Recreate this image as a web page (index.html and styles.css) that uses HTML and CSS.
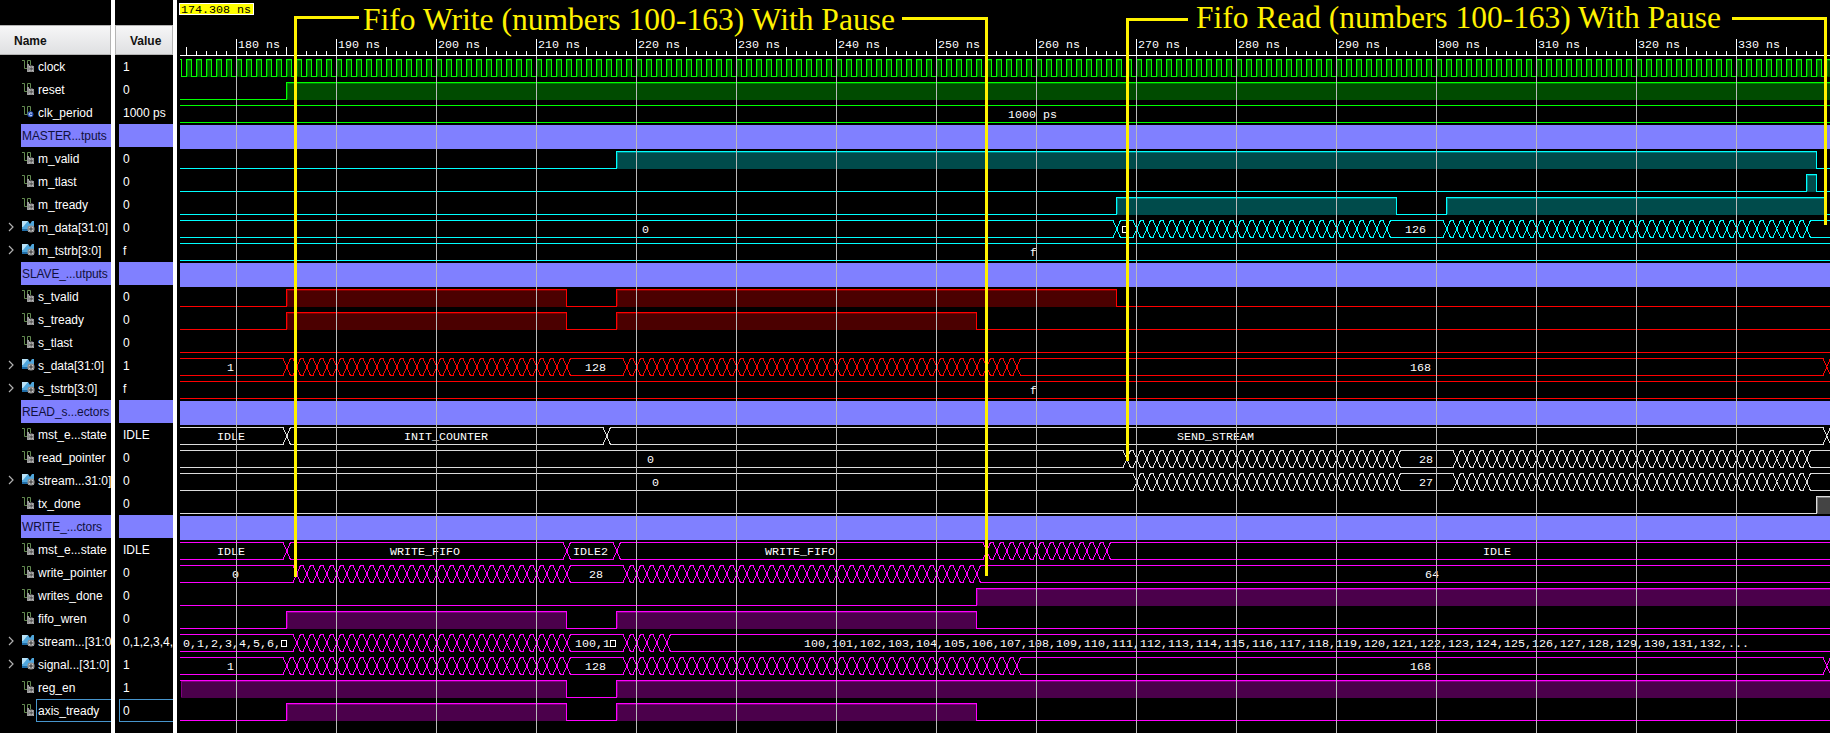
FILE: index.html
```html
<!DOCTYPE html>
<html lang="en">
<head>
<meta charset="utf-8">
<title>Waveform viewer</title>
<link rel="stylesheet" href="styles.css">
</head>
<body>
<svg class="defs" width="0" height="0">
  <defs>
    <symbol id="icon-wire" viewBox="0 0 13 13">
      <path d="M0 0.5H2.5V8.5H5.5V0.5H8.5V5" fill="none" stroke="#638a50"/>
      <path d="M5 4H7V12H5Z" fill="#9a9a9a"/>
      <path d="M7 5.5H10.5L12 7V12H7L6 10V7Z" fill="#8c8c8c"/>
      <path d="M7 6L11.5 11.5M11.5 6L7 11.5" stroke="#c8c8c8"/>
      <circle cx="9.3" cy="8.7" r="1.3" fill="#555"/>
    </symbol>
    <symbol id="icon-const" viewBox="0 0 13 13">
      <path d="M0 0.5H2.5V8.5H5.5V0.5H8.5V5" fill="none" stroke="#638a50"/>
      <circle cx="8.4" cy="8.3" r="3" fill="#2f55b4"/>
      <path d="M10 7.4C9 6.4 7.2 7 7.2 8.3S9 10.2 10 9.2" fill="none" stroke="#dfe8ff"/>
    </symbol>
    <symbol id="icon-bus" viewBox="0 0 13 13">
      <path d="M0 0H6L8 3L10 0H12V5H6V10H0Z" fill="#4fa6dc"/>
      <path d="M0 0H6L1 6H0Z" fill="#b9e2f7"/>
      <path d="M0 8H6V10H0Z" fill="#1f6ca6"/>
      <circle cx="9" cy="8" r="3.6" fill="#929292"/>
      <path d="M6.5 5.5L11.5 10.5M11.5 5.5L6.5 10.5" stroke="#c9c9c9"/>
      <circle cx="9" cy="8" r="1.4" fill="#555"/>
    </symbol>
  </defs>
</svg>
<div class="viewer">
  <div class="names">
    <div class="head head-name">Name</div>
    <div id="names"></div>
  </div>
  <div class="splitter"></div>
  <div class="values">
    <div class="head head-value">Value</div>
    <div id="values"></div>
  </div>
  <div class="splitter"></div>
  <div class="waves">
    <svg class="ruler" id="ruler" width="1653" height="56" viewBox="177 0 1653 56"></svg>
    <div id="waves"></div>
    <svg class="overlay" id="overlay" width="1653" height="733" viewBox="177 0 1653 733"></svg>
    <svg class="cursor" width="75" height="12" viewBox="0 0 75 12">
      <rect x="0.5" y="0.5" width="74" height="11" fill="#ff0" stroke="#fff"/>
      <text x="2" y="10" textLength="70" lengthAdjust="spacingAndGlyphs">174.308 ns</text>
    </svg>
  </div>
</div>
<script src="main.js"></script>
</body>
</html>
```
FILE: styles.css
```css
body {
  margin: 0;
  background: #000;
  color: #fff;
  font: 12px "Liberation Sans", Arial, sans-serif;
  overflow: hidden;
}
.defs { position: absolute; }
.viewer { display: flex; width: 1830px; height: 733px; overflow: hidden; }
.names { width: 111px; padding-top: 25px; overflow: hidden; flex: none; }
.splitter { width: 4px; background: #fff; flex: none; }
.values { width: 58px; padding-top: 25px; overflow: hidden; flex: none; }
.waves { position: relative; width: 1653px; flex: none; }

.head {
  box-sizing: border-box;
  height: 30px;
  line-height: 31px;
  color: #111;
  font-weight: bold;
  border: solid #b4b4b4;
  background: linear-gradient(#f6f6f7, #dfe0e2);
}
.head-name { padding-left: 14px; border-width: 1px 1px 1px 0; }
.head-value { padding-left: 14px; border-width: 1px 1px 1px 1px; }

.row { display: flex; height: 23px; line-height: 25px; white-space: pre; }
.arrow { width: 21px; flex: none; }
.arrow svg { display: block; margin: 6px 0 0 7px; }
.cell { display: flex; flex: 1; min-width: 0; overflow: hidden; box-sizing: border-box; }
.icon { width: 14px; flex: none; padding-left: 1px; }
.icon svg { display: block; margin-top: 5px; }
.label { flex: 1; min-width: 0; height: 23px; overflow: hidden; padding-left: 2px; box-sizing: border-box; }
.group .label { background: #8080ff; color: #10103c; padding-left: 1px; letter-spacing: -0.1px; }
.value { height: 23px; margin-left: 4px; padding-left: 4px; flex: 1; overflow: hidden; box-sizing: border-box; }
.group .value { background: #8080ff; }
.selected .label, .selected .value { border: 1px solid #4795cc; border-right: 0; line-height: 23px; }
.selected .label { padding-left: 1px; }
.selected .value { padding-left: 3px; }

.ruler { display: block; }
.track { display: block; overflow: visible; shape-rendering: crispEdges; }
.track text, .ruler text, .cursor text {
  font: 11px "Liberation Mono", "Courier New", monospace;
  fill: #fff;
}
.line { fill: none; stroke-width: 1; }
.tick { stroke: #fff; fill: none; shape-rendering: crispEdges; }
.more { fill: none; stroke: #fff; }
.overlay { position: absolute; left: 0; top: 0; }
.grid { stroke: #b9b9b9; fill: none; shape-rendering: crispEdges; }
.bracket { stroke: #fff200; stroke-width: 3; fill: none; shape-rendering: crispEdges; }
.title { font: 31.5px "Liberation Serif", "Times New Roman", serif; fill: #fff200; }
.cursor { position: absolute; left: 2px; top: 3px; }
.cursor text { fill: #000; }
```
FILE: main.js
```js
const LEFT = 180, RIGHT = 1830;
const px = ns => 236 + (ns - 180) * 10;
const G = ['#00ff00', '#004b00', '#007f00'];
const C = ['#00ffff', '#004b4b', '#008080'];
const R = ['#ff0000', '#4b0000', '#800000'];
const W = ['#dcdcdc', '#444444', '#808080'];
const M = ['#ff00ff', '#4b004b', '#800080'];

const run = (a, b) => Array.from({ length: b - a + 1 }, (_, i) => a + i);
const clockHighs = run(174, 340).map(t => [t, t + 0.5]);

// Row fields: name, value, icon, colors, highs | edges, labels [text, x, boxX]
const rows = [
  { n: 'clock', v: '1', c: G, highs: clockHighs },
  { n: 'reset', v: '0', c: G, highs: [[185, 345]] },
  { n: 'clk_period', v: '1000 ps', icon: 'const', c: G, edges: [], t: [['1000 ps', 1008]] },
  { n: 'MASTER...tputs', group: true },
  { n: 'm_valid', v: '0', c: C, highs: [[218, 338]] },
  { n: 'm_tlast', v: '0', c: C, highs: [[337, 338]] },
  { n: 'm_tready', v: '0', c: C, highs: [[268, 296], [301, 339]] },
  { n: 'm_data[31:0]', v: '0', icon: 'bus', c: C, edges: [268, ...run(270, 295), ...run(301, 337)], t: [['0', 642], ['', 0, 1122.5], ['126', 1405]] },
  { n: 'm_tstrb[3:0]', v: 'f', icon: 'bus', c: C, edges: [], t: [['f', 1030]] },
  { n: 'SLAVE_...utputs', group: true },
  { n: 's_tvalid', v: '0', c: R, highs: [[185, 213], [218, 268]] },
  { n: 's_tready', v: '0', c: R, highs: [[185, 213], [218, 254]] },
  { n: 's_tlast', v: '0', c: R, highs: [] },
  { n: 's_data[31:0]', v: '1', icon: 'bus', c: R, edges: [...run(185, 213), ...run(219, 258), 339], t: [['1', 227], ['128', 585], ['168', 1410]] },
  { n: 's_tstrb[3:0]', v: 'f', icon: 'bus', c: R, edges: [], t: [['f', 1030]] },
  { n: 'READ_s...ectors', group: true },
  { n: 'mst_e...state', v: 'IDLE', c: W, edges: [185, 217, 339], t: [['IDLE', 217], ['INIT_COUNTER', 404], ['SEND_STREAM', 1177]] },
  { n: 'read_pointer', v: '0', c: W, edges: [...run(269, 296), ...run(302, 337)], t: [['0', 647], ['28', 1419]] },
  { n: 'stream...31:0]', v: '0', icon: 'bus', c: W, edges: [...run(270, 296), ...run(302, 337)], t: [['0', 652], ['27', 1419]] },
  { n: 'tx_done', v: '0', c: W, highs: [[338, 345]] },
  { n: 'WRITE_...ctors', group: true },
  { n: 'mst_e...state', v: 'IDLE', c: M, edges: [185, 213, 218, ...run(255, 267)], t: [['IDLE', 217], ['WRITE_FIFO', 390], ['IDLE2', 573], ['WRITE_FIFO', 765], ['IDLE', 1483]] },
  { n: 'write_pointer', v: '0', c: M, edges: [...run(186, 213), ...run(219, 254)], t: [['0', 232], ['28', 589], ['64', 1425]] },
  { n: 'writes_done', v: '0', c: M, highs: [[254, 345]] },
  { n: 'fifo_wren', v: '0', c: M, highs: [[185, 213], [218, 254]] },
  { n: 'stream...[31:0]', v: '0,1,2,3,4,5', icon: 'bus', c: M, edges: [...run(186, 213), ...run(219, 223)],
    t: [['0,1,2,3,4,5,6,', 183, 281.5], ['100,1', 575, 610.5], [run(100, 132).join(',') + ',...', 804]] },
  { n: 'signal...[31:0]', v: '1', icon: 'bus', c: M, edges: [...run(185, 213), ...run(219, 258), 339], t: [['1', 227], ['128', 585], ['168', 1410]] },
  { n: 'reg_en', v: '1', c: M, highs: [[170, 213], [218, 345]] },
  { n: 'axis_tready', v: '0', c: M, highs: [[185, 213], [218, 254]], selected: true },
];

const text = (s, x, y) => s ? `<text x="${x}" y="${y}" textLength="${s.length * 7}" lengthAdjust="spacingAndGlyphs">${s}</text>` : '';

function logicTrack({ highs, c }) {
  let fills = '', d = `M${LEFT} 20.5`;
  for (const [a, b] of highs) {
    const x0 = px(a) + 0.5, x1 = Math.min(px(b) + 0.5, RIGHT + 5);
    if (x1 < LEFT) continue;
    const s = Math.max(x0, 180.5);
    fills += `<rect x="${s + 0.5}" y="4" width="${x1 - s - 0.5}" height="17" fill="${c[1]}"/>` +
      `<path class="line" d="M${s + 1} 20V4.5H${x1 - 0.5}" stroke="${c[2]}"/>`;
    d += x0 < LEFT ? `M${LEFT} 3.5H${x1}V20.5` : `H${x0}V3.5H${x1}V20.5`;
  }
  return `${fills}<path class="line" d="${d}H${RIGHT + 5}" stroke="${c[0]}"/>`;
}

function busTrack({ edges, c, t }) {
  let a = `M${LEFT} 3.5`, b = `M${LEFT} 20.5`, flip = false;
  for (const e of edges) {
    const x = px(e) + 0.5, from = flip ? 20.5 : 3.5, to = flip ? 3.5 : 20.5;
    a += `H${x - 3.5}L${x + 4} ${to}`;
    b += `H${x - 3.5}L${x + 4} ${from}`;
    flip = !flip;
  }
  return `<path class="line" d="${a}H${RIGHT}${b}H${RIGHT}" stroke="${c[0]}"/>` +
    t.map(([s, x, box]) => text(s, x, 16) + (box ? `<rect class="more" x="${box}" y="9.5" width="5" height="6"/>` : '')).join('');
}

const cls = r => 'row' + (r.group ? ' group' : '') + (r.selected ? ' selected' : '');

document.getElementById('names').innerHTML = rows.map(r => {
  const arrow = r.icon === 'bus' ? '<svg width="8" height="10"><path d="M2 1L6 5L2 9" fill="none" stroke="#b0b0b0" stroke-width="1.2"/></svg>' : '';
  const icon = r.group ? '' : `<div class="icon"><svg width="13" height="13"><use href="#icon-${r.icon || 'wire'}"/></svg></div>`;
  return `<div class="${cls(r)}"><div class="arrow">${arrow}</div><div class="cell">${icon}<div class="label">${r.n}</div></div></div>`;
}).join('');

document.getElementById('values').innerHTML = rows.map(r =>
  `<div class="${cls(r)}"><div class="value">${r.v || ''}</div></div>`).join('');

document.getElementById('waves').innerHTML = rows.map(r => {
  const body = r.group ? `<rect x="${LEFT}" y="0" width="1650" height="24" fill="#8080ff"/>` : r.highs ? logicTrack(r) : busTrack(r);
  return `<svg class="track" width="1653" height="23" viewBox="177 0 1653 23">${body}</svg>`;
}).join('');

let ticks = `M${LEFT} 55.5H${RIGHT}`, labels = '', grid = '';
for (let t = 175; t <= 339; t++) {
  const x = px(t) + 0.5;
  ticks += `M${x} ${t % 10 === 0 ? 39 : t % 5 === 0 ? 47 : 51}V56`;
  if (t % 10 === 0) {
    labels += text(t + ' ns', x + 1.5, 48);
    grid += `M${x} 56V733`;
  }
}
document.getElementById('ruler').innerHTML = `<path class="tick" d="${ticks}"/>${labels}`;

document.getElementById('overlay').innerHTML = `
  <path class="grid" d="${grid}"/>
  <path class="bracket" d="M359 17.5H295.5V577M902 18.5H986.5V576M1188 19.5H1127.5V461M1732 18.5H1825.5V225"/>
  <text class="title" x="363" y="30" textLength="532" lengthAdjust="spacingAndGlyphs">Fifo Write (numbers 100-163) With Pause</text>
  <text class="title" x="1196" y="28" textLength="525" lengthAdjust="spacingAndGlyphs">Fifo Read (numbers 100-163) With Pause</text>`;
```
